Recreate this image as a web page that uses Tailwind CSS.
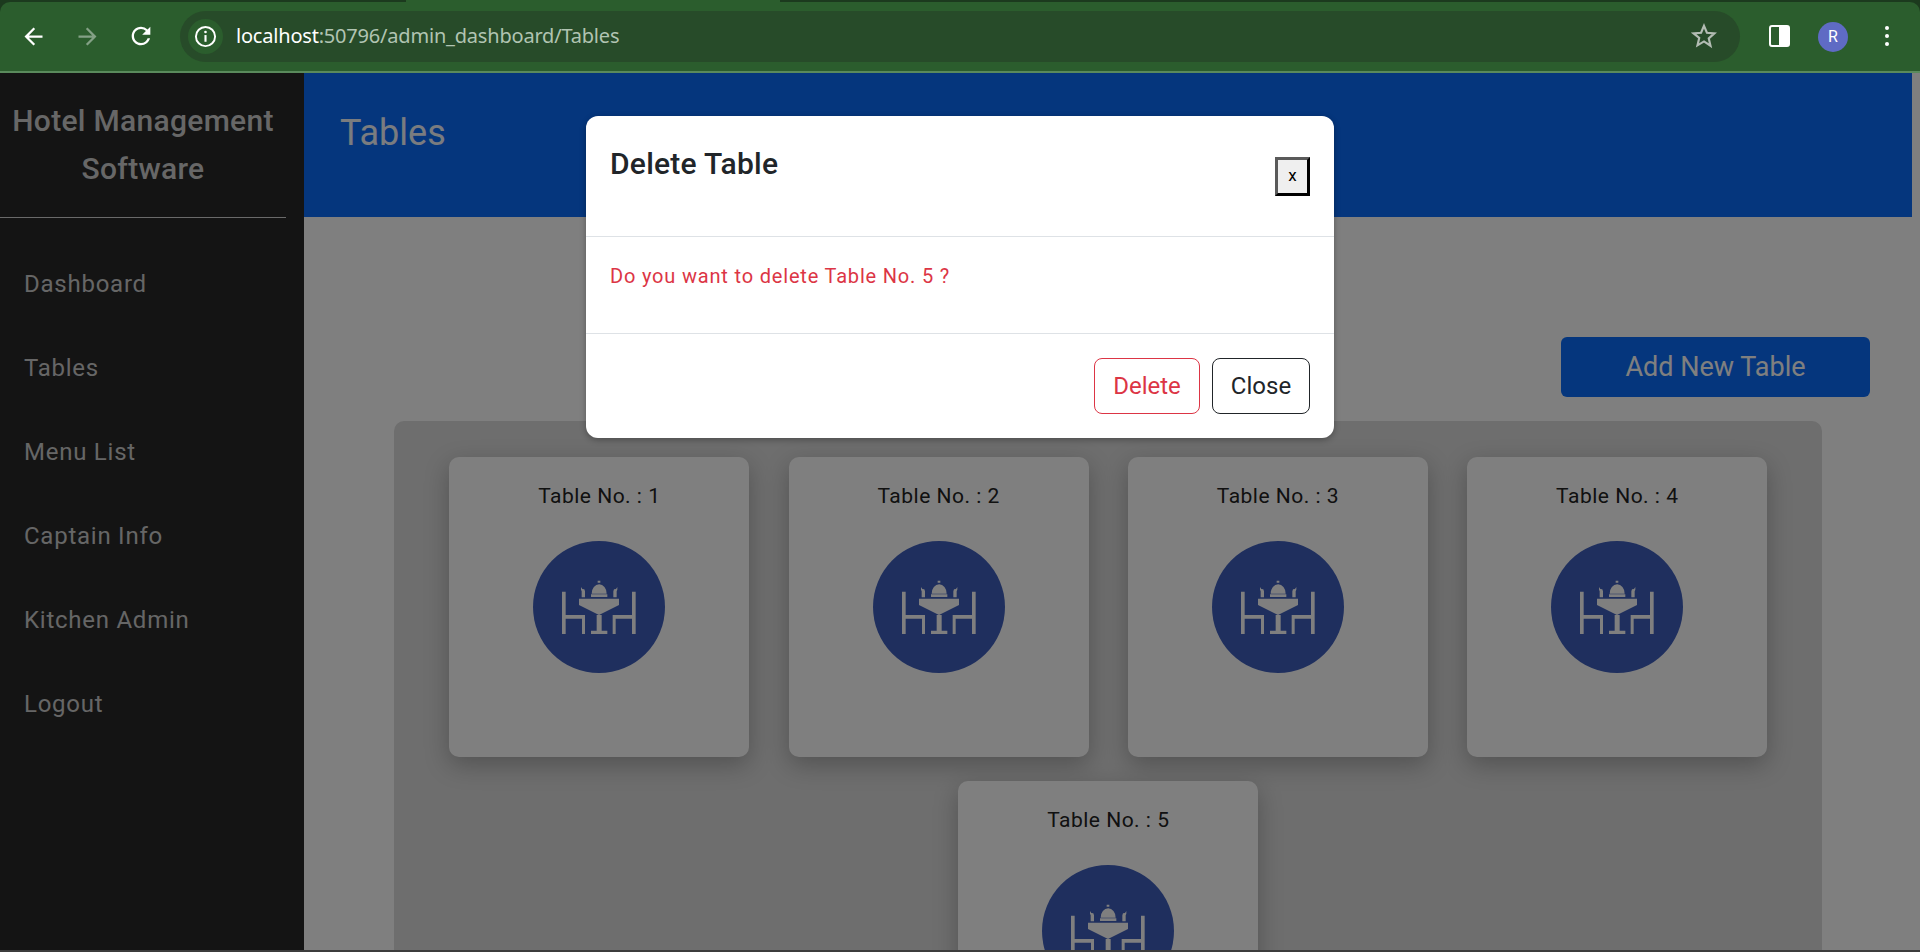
<!DOCTYPE html>
<html lang="en">
<head>
<meta charset="utf-8">
<title>Tables</title>
<script src="https://cdn.jsdelivr.net/npm/@tailwindcss/browser@4"></script>
</head>
<body class="relative w-[1920px] h-[952px] overflow-hidden flex flex-col bg-[#3c3c3c] font-['Roboto',sans-serif]">

<!-- Browser chrome -->
<div class="relative h-[73px] shrink-0 bg-[#1c3a1e]">
  <div class="absolute left-[406px] top-0 w-[374px] h-[2px] bg-[#2b5d2d]"></div>
  <div class="absolute inset-x-0 top-[2px] h-[71px] bg-[#2b5d2d] rounded-t-[10px] border-b-2 border-[#5a8a5c] flex items-center pl-[20px]">
    <svg class="w-[27px] h-[27px] -mt-[1px]" viewBox="0 0 24 24" fill="#ffffff"><path d="M20 11H7.83l5.59-5.59L12 4l-8 8 8 8 1.41-1.41L7.83 13H20v-2z"/></svg>
    <svg class="w-[27px] h-[27px] -mt-[1px] ml-[27px]" viewBox="0 0 24 24" fill="#84a186"><path d="M4 11h12.170l-5.590-5.590L12 4l8 8-8 8-1.410-1.410L16.170 13H4v-2z"/></svg>
    <svg class="w-[28px] h-[28px] -mt-[1px] ml-[26px]" viewBox="0 0 24 24" fill="#ffffff"><path d="M17.65 6.35A7.958 7.958 0 0 0 12 4c-4.42 0-7.99 3.58-7.99 8s3.57 8 7.99 8c3.73 0 6.84-2.55 7.73-6h-2.08A5.99 5.99 0 0 1 12 18c-3.31 0-6-2.69-6-6s2.69-6 6-6c1.66 0 3.14.69 4.22 1.78L13 11h7V4l-2.35 2.35z"/></svg>
    <div class="ml-[25px] w-[1560px] h-[51px] -mt-[1px] rounded-full bg-[#274b29] flex items-center pl-[8px] pr-[23px]">
      <div class="w-[35px] h-[35px] rounded-full bg-[#2b5d2d] flex items-center justify-center">
        <svg class="w-[23px] h-[23px]" viewBox="0 0 24 24" fill="none" stroke="#ffffff"><circle cx="12" cy="12" r="10" stroke-width="2"/><path d="M12 10.5V17.5" stroke-width="2.2"/><circle cx="12" cy="7.3" r="1.4" fill="#ffffff" stroke="none"/></svg>
      </div>
      <div class="ml-[13px] text-[20px] font-['Noto_Sans',sans-serif] tracking-[-0.2px] text-[#b1c4b2] whitespace-nowrap"><span class="text-white">localhost</span>:50796/admin_dashboard/Tables</div>
      <svg class="ml-auto w-[26px] h-[26px]" viewBox="0 0 24 24" fill="none" stroke="#b3bcb3" stroke-width="2" stroke-linejoin="miter"><path d="M12 2.6l2.7 6.4 6.9.6-5.2 4.6 1.6 6.8L12 17l-6 3.6 1.6-6.8L2.4 9.6 9.3 9z"/></svg>
    </div>
    <div class="ml-[29px] w-[21px] h-[22px] rounded-[3px] border-2 border-white flex justify-end -mt-[1px]"><div class="w-[9px] h-full bg-white"></div></div>
    <div class="ml-[28px] w-[30px] h-[30px] rounded-full bg-[#5f6bc4] text-white text-[16px] flex items-center justify-center">R</div>
    <div class="ml-[36.700px] flex flex-col gap-[3.6px] -mt-[1px]">
      <div class="w-[4.6px] h-[4.6px] rounded-full bg-white"></div>
      <div class="w-[4.6px] h-[4.6px] rounded-full bg-white"></div>
      <div class="w-[4.6px] h-[4.6px] rounded-full bg-white"></div>
    </div>
  </div>
</div>

<!-- App -->
<div class="flex h-[877px] shrink-0 bg-white overflow-hidden">
  <aside class="w-[304px] shrink-0 bg-[#282828]">
    <div class="h-[145px] mr-[18px] border-b border-[#d4d4d4] pt-[24px] text-center text-[30px] leading-[48px] tracking-[0.3px] font-medium text-[#cfcfcf]">Hotel Management<br>Software</div>
    <nav class="flex flex-col pt-[24px] pl-[24px] text-[24px] leading-[84px] tracking-[0.75px] text-[#cccccc]">
      <a>Dashboard</a><a>Tables</a><a>Menu List</a><a>Captain Info</a><a>Kitchen Admin</a><a>Logout</a>
    </nav>
  </aside>

  <main class="flex-1 min-w-0 pr-[8px]">
    <header class="h-[144px] bg-[#0a6cfa] pl-[36px] pt-[39px] text-[36px] leading-[42px] text-[#f4f8ff]">Tables</header>
    <div class="flex justify-end pt-[120px] pr-[42px]">
      <button class="w-[309px] h-[60px] rounded-[6px] bg-[#0a6cfa] text-white text-[27px]">Add New Table</button>
    </div>
    <section class="mx-[90px] mt-[24px] pt-[36px] pl-[0.6px] h-[600px] rounded-t-[10px] bg-[#dcdcdc] flex flex-wrap justify-center content-start gap-x-[39.33px] gap-y-[24px]">

      <div class="w-[300px] h-[300px] rounded-[10px] bg-white shadow-[0_8px_24px_rgba(0,0,0,0.25)] flex flex-col items-center pt-[27px] text-[21px] leading-[24px] tracking-[0.5px] text-[#222]">
        <p>Table No. : 1</p>
        <div class="mt-[33px] w-[132px] h-[132px] rounded-full bg-[#3e5ebc]">
          <svg class="w-[132px] h-[132px]" viewBox="9 3 396 396" fill="#ffffff"><path d="M96 155h11v70h58v57h-9v-46h-49v46h-11zM317 155h-11v70h-58v57h9v-46h49v46h11zM147 176h120v19l-60 30-60-30zM200 225h15v47h17v10h-49v-10h17zM185 161a22.500 28 0 0 1 45 0zM183 163h49v8h-49zM153 141l4 6 6 1 2 6v18h-10v-18l-2-5zM262 141l-4 6-6 1-2 6v18h10v-18l2-5zM203 122h8v6h-8z"/></svg>
        </div>
      </div>

      <div class="w-[300px] h-[300px] rounded-[10px] bg-white shadow-[0_8px_24px_rgba(0,0,0,0.25)] flex flex-col items-center pt-[27px] text-[21px] leading-[24px] tracking-[0.5px] text-[#222]">
        <p>Table No. : 2</p>
        <div class="mt-[33px] w-[132px] h-[132px] rounded-full bg-[#3e5ebc]">
          <svg class="w-[132px] h-[132px]" viewBox="9 3 396 396" fill="#ffffff"><path d="M96 155h11v70h58v57h-9v-46h-49v46h-11zM317 155h-11v70h-58v57h9v-46h49v46h11zM147 176h120v19l-60 30-60-30zM200 225h15v47h17v10h-49v-10h17zM185 161a22.500 28 0 0 1 45 0zM183 163h49v8h-49zM153 141l4 6 6 1 2 6v18h-10v-18l-2-5zM262 141l-4 6-6 1-2 6v18h10v-18l2-5zM203 122h8v6h-8z"/></svg>
        </div>
      </div>

      <div class="w-[300px] h-[300px] rounded-[10px] bg-white shadow-[0_8px_24px_rgba(0,0,0,0.25)] flex flex-col items-center pt-[27px] text-[21px] leading-[24px] tracking-[0.5px] text-[#222]">
        <p>Table No. : 3</p>
        <div class="mt-[33px] w-[132px] h-[132px] rounded-full bg-[#3e5ebc]">
          <svg class="w-[132px] h-[132px]" viewBox="9 3 396 396" fill="#ffffff"><path d="M96 155h11v70h58v57h-9v-46h-49v46h-11zM317 155h-11v70h-58v57h9v-46h49v46h11zM147 176h120v19l-60 30-60-30zM200 225h15v47h17v10h-49v-10h17zM185 161a22.500 28 0 0 1 45 0zM183 163h49v8h-49zM153 141l4 6 6 1 2 6v18h-10v-18l-2-5zM262 141l-4 6-6 1-2 6v18h10v-18l2-5zM203 122h8v6h-8z"/></svg>
        </div>
      </div>

      <div class="w-[300px] h-[300px] rounded-[10px] bg-white shadow-[0_8px_24px_rgba(0,0,0,0.25)] flex flex-col items-center pt-[27px] text-[21px] leading-[24px] tracking-[0.5px] text-[#222]">
        <p>Table No. : 4</p>
        <div class="mt-[33px] w-[132px] h-[132px] rounded-full bg-[#3e5ebc]">
          <svg class="w-[132px] h-[132px]" viewBox="9 3 396 396" fill="#ffffff"><path d="M96 155h11v70h58v57h-9v-46h-49v46h-11zM317 155h-11v70h-58v57h9v-46h49v46h11zM147 176h120v19l-60 30-60-30zM200 225h15v47h17v10h-49v-10h17zM185 161a22.500 28 0 0 1 45 0zM183 163h49v8h-49zM153 141l4 6 6 1 2 6v18h-10v-18l-2-5zM262 141l-4 6-6 1-2 6v18h10v-18l2-5zM203 122h8v6h-8z"/></svg>
        </div>
      </div>

      <div class="w-[300px] h-[300px] rounded-[10px] bg-white shadow-[0_8px_24px_rgba(0,0,0,0.25)] flex flex-col items-center pt-[27px] text-[21px] leading-[24px] tracking-[0.5px] text-[#222]">
        <p>Table No. : 5</p>
        <div class="mt-[33px] w-[132px] h-[132px] rounded-full bg-[#3e5ebc]">
          <svg class="w-[132px] h-[132px]" viewBox="9 3 396 396" fill="#ffffff"><path d="M96 155h11v70h58v57h-9v-46h-49v46h-11zM317 155h-11v70h-58v57h9v-46h49v46h11zM147 176h120v19l-60 30-60-30zM200 225h15v47h17v10h-49v-10h17zM185 161a22.500 28 0 0 1 45 0zM183 163h49v8h-49zM153 141l4 6 6 1 2 6v18h-10v-18l-2-5zM262 141l-4 6-6 1-2 6v18h10v-18l2-5zM203 122h8v6h-8z"/></svg>
        </div>
      </div>

    </section>
  </main>
</div>

<!-- Modal overlay -->
<div class="absolute inset-x-0 top-[73px] bottom-[2px] bg-black/50">
  <div class="mx-auto mt-[43px] w-[748px] h-[322px] rounded-[12px] bg-white shadow-[0_2px_6px_rgba(0,0,0,0.3)] flex flex-col">
    <div class="h-[121px] shrink-0 border-b border-[#dee2e6] flex justify-between pl-[24px] pr-[24px]">
      <h2 class="pt-[30px] text-[30px] leading-[36px] tracking-[0.25px] font-medium text-[#212529]">Delete Table</h2>
      <button class="mt-[41px] w-[35px] h-[39px] pb-[2px] border-[3px] border-solid border-t-[#5a5a5a] border-l-[#5a5a5a] border-r-black border-b-black bg-[#efefef] text-[17px] leading-none text-black">x</button>
    </div>
    <div class="h-[97px] shrink-0 border-b border-[#dee2e6] pl-[24px] pt-[25px] text-[20px] leading-[28px] tracking-[0.82px] text-[#dc3545]">Do you want to delete Table No. 5 ?</div>
    <div class="flex-1 flex justify-end items-start gap-[12px] pr-[24px] pt-[24px] text-[24px]">
      <button class="w-[106px] h-[56px] rounded-[8px] border border-[#dc3545] text-[#dc3545]">Delete</button>
      <button class="w-[98px] h-[56px] rounded-[8px] border border-[#212529] text-[#212529]">Close</button>
    </div>
  </div>
</div>
</body>
</html>
